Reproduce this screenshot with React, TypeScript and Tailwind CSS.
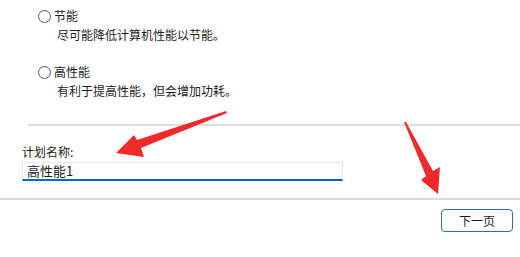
import React from "react";

function Radio() {
  return <span className="block w-[13px] h-[13px] rounded-full border border-[#5a5a5a] bg-white shrink-0" />;
}

export default function App() {
  return (
    <div className="relative w-[520px] h-[257px] bg-white overflow-hidden text-[#1b1b1b] font-['Noto_Sans_CJK_SC','Noto_Sans',sans-serif] text-[12px]">
      <div className="pt-[6px] pl-[38px]">
        <div className="flex items-center h-[20px] gap-[3px]">
          <Radio />
          <span className="leading-[20px]">节能</span>
        </div>
        <div className="pl-[19px] h-[18px] leading-[18px]">尽可能降低计算机性能以节能。</div>
        <div className="flex items-center h-[20px] gap-[3px] mt-[18px]">
          <Radio />
          <span className="leading-[20px]">高性能</span>
        </div>
        <div className="pl-[19px] h-[18px] leading-[18px]">有利于提高性能，但会增加功耗。</div>
      </div>
      <div className="ml-[28px] mt-[24px] h-[2px] bg-[#dedede]" />
      <div className="pl-[22px]">
        <div className="mt-[18px] h-[16px] leading-[16px]">计划名称:</div>
        <div className="mt-[2px] w-[321px] h-[19px] border border-[#e6e6e6] border-b-2 border-b-[#0067c0] pl-[4px] leading-[16px] text-[13px]">
          高性能1
        </div>
      </div>
      <div className="mt-[17px] h-[2px] bg-[#dadada]" />
      <div className="flex justify-end pr-[7px] mt-[9px]">
        <button className="w-[72px] h-[23px] rounded-[4px] border border-[#2e6da6] bg-white text-[12px] leading-[20px] text-[#1b1b1b]">
          下一页
        </button>
      </div>
      <svg className="absolute inset-0 pointer-events-none" width="520" height="257" viewBox="0 0 520 257">
        <polygon
          fill="#f02a2a"
          points="226,111 227,113 141,148 144,157 116,153 134,135 137,140"
        />
        <polygon
          fill="#f02a2a"
          points="404,122 406,122 433,171 440,167 438,194 421,180 426,176"
        />
      </svg>
    </div>
  );
}
